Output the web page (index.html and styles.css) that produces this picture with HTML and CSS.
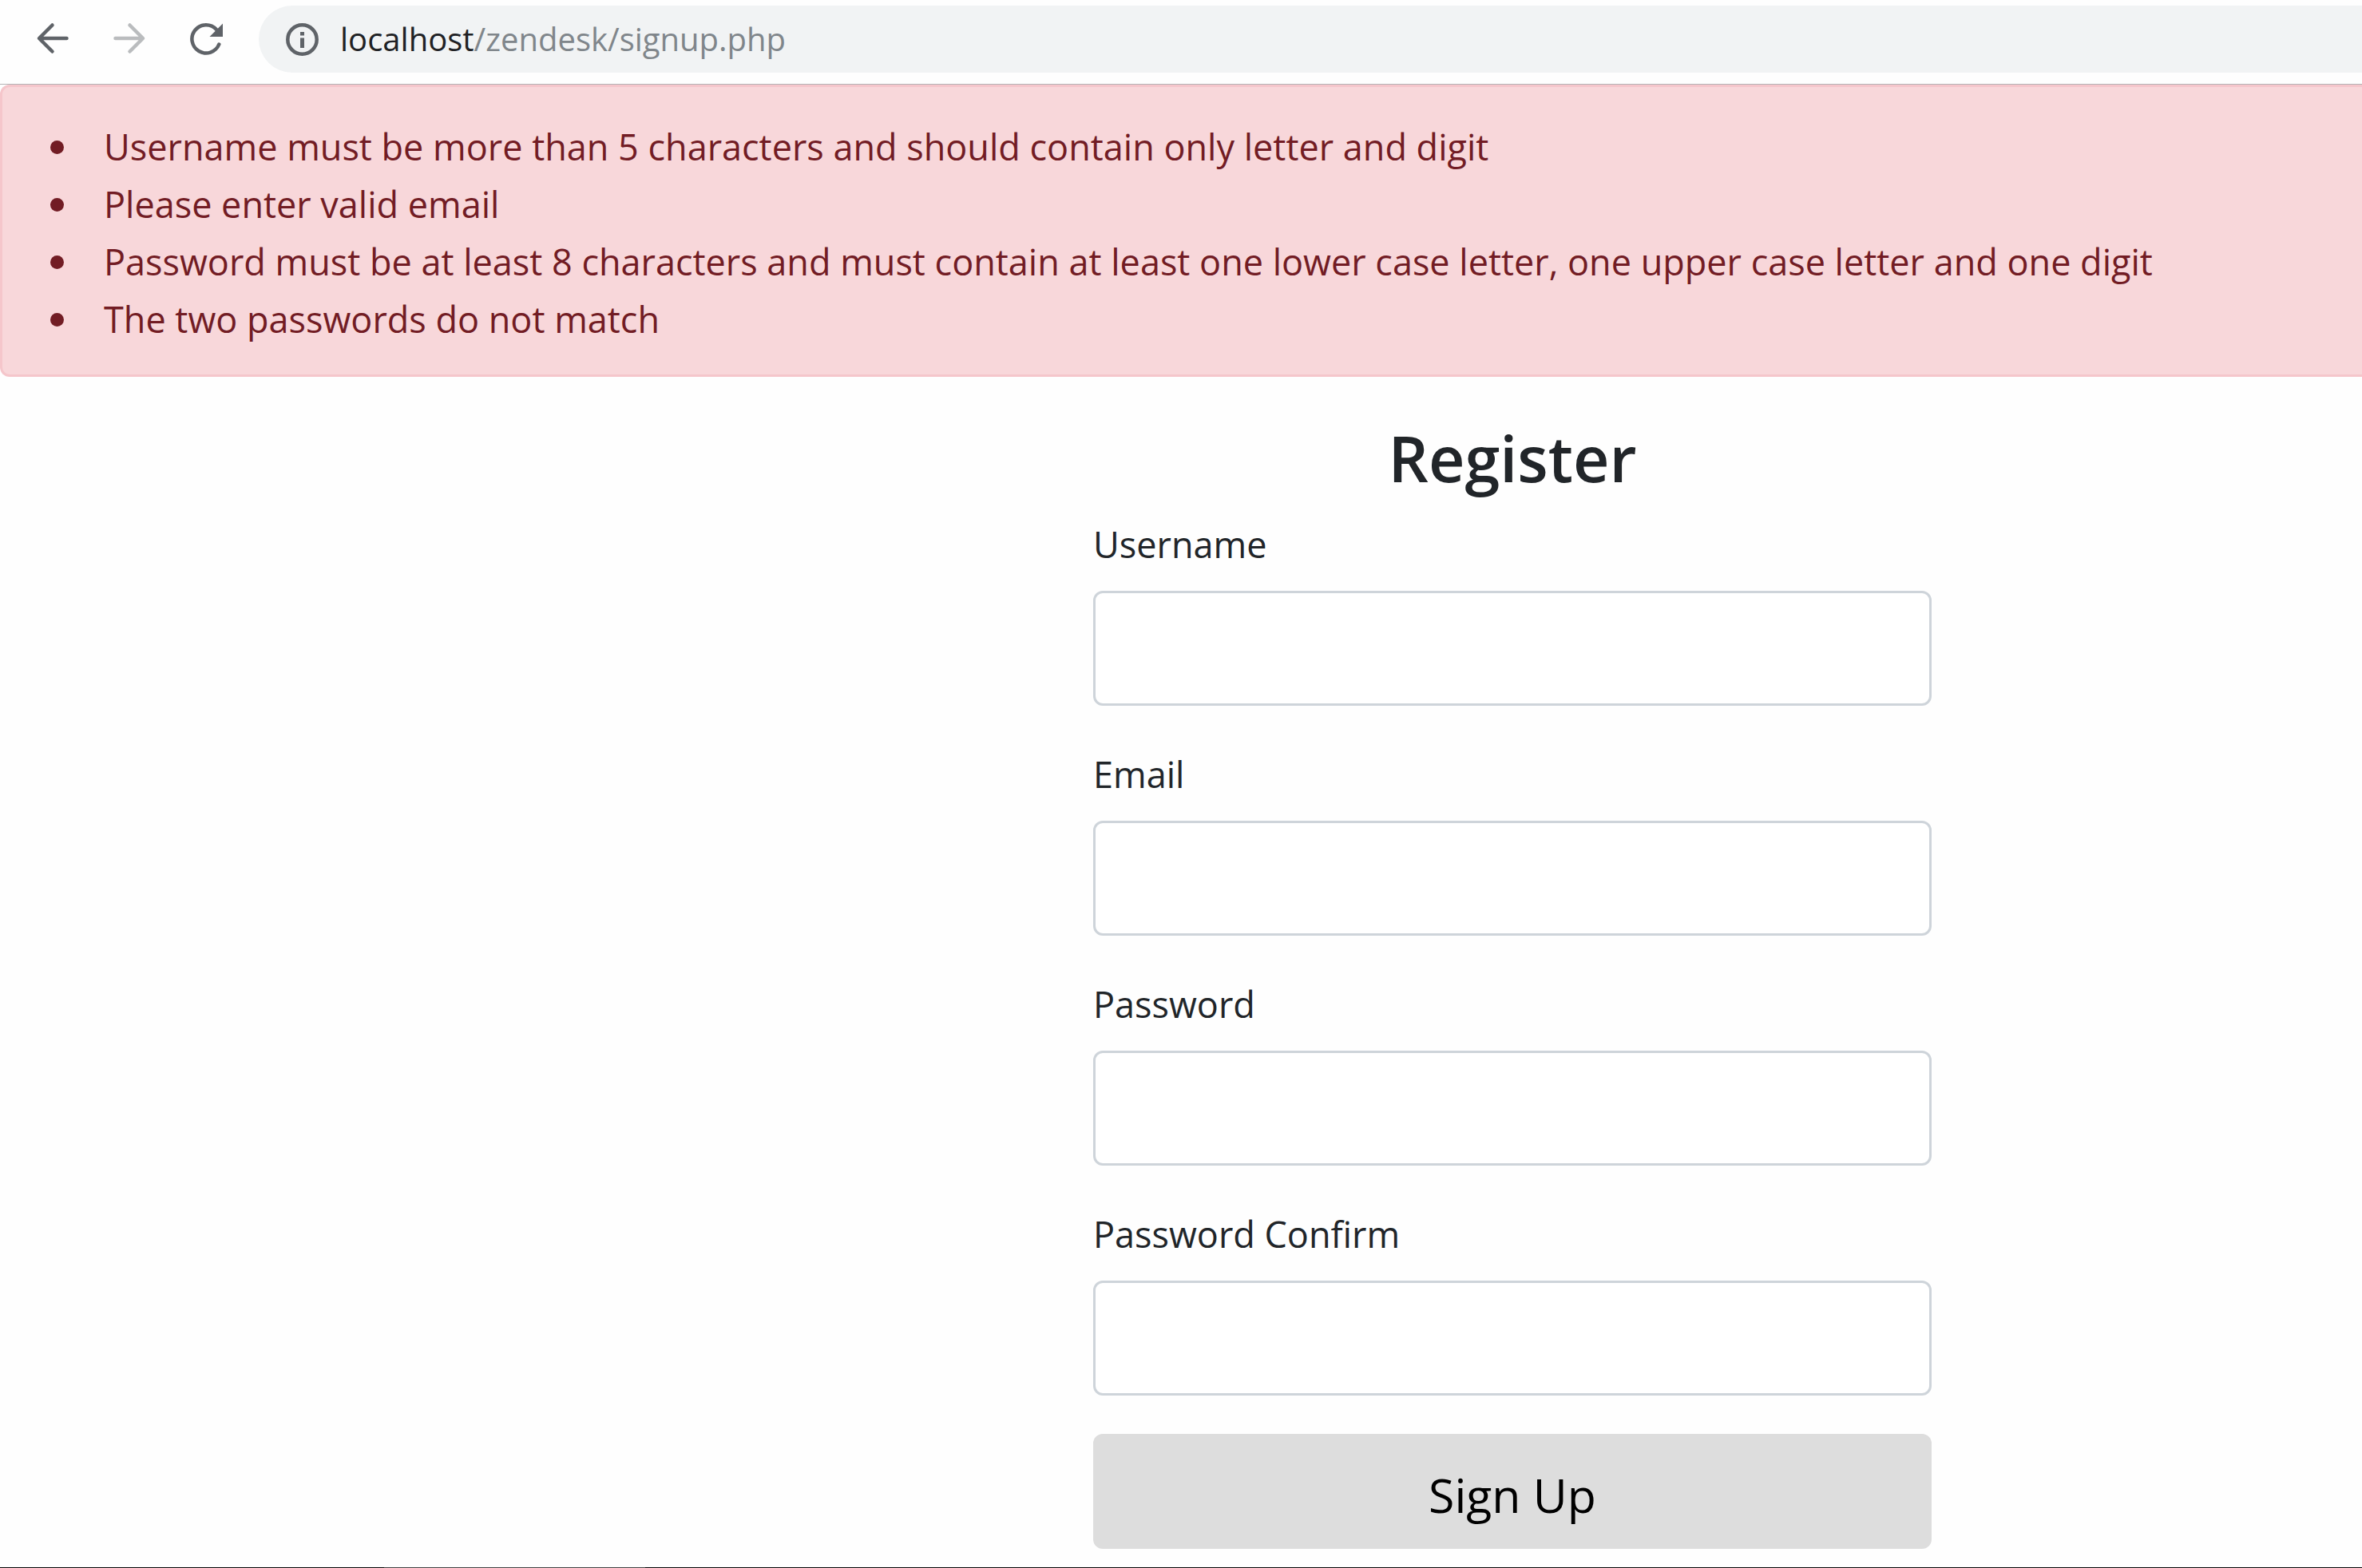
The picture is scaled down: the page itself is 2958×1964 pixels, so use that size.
FILE: index.html
```html
<!DOCTYPE html>
<html lang="en">
<head>
<meta charset="utf-8">
<title>Register</title>
<link rel="stylesheet" href="styles.css">
</head>
<body>
<header class="toolbar">
  <nav class="nav-buttons">
    <button class="icon-button" type="button" aria-label="Back">
      <svg class="icon" viewBox="0 0 48 48"><path d="M41.500 23H7.500M23.500 6.500L7 23l16.500 16.500" fill="none" stroke="#5f6368" stroke-width="4.500" stroke-linecap="round" stroke-linejoin="round"/></svg>
    </button>
    <button class="icon-button" type="button" aria-label="Forward" disabled>
      <svg class="icon" viewBox="0 0 48 48"><path d="M6.500 23h34M24.500 6.500L41 23 24.500 39.500" fill="none" stroke="#babcbe" stroke-width="4.500" stroke-linecap="round" stroke-linejoin="round"/></svg>
    </button>
    <button class="icon-button" type="button" aria-label="Reload">
      <svg class="icon" viewBox="0 0 48 48"><path d="M40.300 30.500A17.600 17.600 0 1 1 37 12" fill="none" stroke="#5f6368" stroke-width="4.500" stroke-linecap="round"/><path d="M45 4.500V21H28.500z" fill="#5f6368"/></svg>
    </button>
  </nav>
  <div class="address" role="textbox" aria-label="Address">
    <svg class="icon" viewBox="0 0 48 48"><circle cx="24.500" cy="24.500" r="18.200" fill="none" stroke="#5f6368" stroke-width="4.500"/><path d="M22 15h5v4.500h-5zM22 22.500h5V35h-5z" fill="#5f6368"/></svg>
    <span class="url"><span class="host">localhost</span>/zendesk/signup.php</span>
  </div>
</header>
<main class="page">
  <ul class="alert" role="alert">
    <li>Username must be more than 5 characters and should contain only letter and digit</li>
    <li>Please enter valid email</li>
    <li>Password must be at least 8 characters and must contain at least one lower case letter, one upper case letter and one digit</li>
    <li>The two passwords do not match</li>
  </ul>
  <form class="register">
    <h1 class="title">Register</h1>
    <div class="field">
      <label for="username">Username</label>
      <input id="username" type="text">
    </div>
    <div class="field">
      <label for="email">Email</label>
      <input id="email" type="email">
    </div>
    <div class="field">
      <label for="password">Password</label>
      <input id="password" type="password">
    </div>
    <div class="field">
      <label for="confirm">Password Confirm</label>
      <input id="confirm" type="password">
    </div>
    <button class="submit" type="submit">Sign Up</button>
  </form>
</main>
<footer class="taskbar"><span class="task"></span></footer>
</body>
</html>
```
FILE: styles.css
```css
* {
  box-sizing: border-box;
}

body {
  margin: 0;
  min-height: 100vh;
  display: flex;
  flex-direction: column;
  background: #fefefe;
  color: #212529;
  font-family: "Open Sans", "Noto Sans", sans-serif;
  font-size: 45px;
  line-height: 72px;
}

/* Browser toolbar */
.toolbar {
  display: flex;
  align-items: center;
  gap: 42px;
  padding: 7px 0 14px 42px;
  border-bottom: 1px solid #b3b3b5;
}

.nav-buttons {
  display: flex;
  gap: 48px;
}

.icon-button {
  display: flex;
  padding: 0;
  border: 0;
  background: none;
}

.icon {
  display: block;
  width: 48px;
  height: 48px;
  flex: none;
}

.address {
  flex: 1;
  display: flex;
  align-items: center;
  gap: 24px;
  height: 84px;
  padding-left: 30px;
  border-radius: 42px 0 0 42px;
  background: #f1f3f4;
}

.url {
  color: #80868b;
  font-size: 40px;
  white-space: nowrap;
}

.host {
  color: #202124;
}

/* Page */
.page {
  flex: 1;
}

.alert {
  margin: 0;
  padding: 39px 0 33px 60px;
  border: 3px solid #f5c6cb;
  border-right: 0;
  border-radius: 12px 0 0 12px;
  background: #f8d7da;
  color: #721c24;
  list-style: none;
}

.alert li {
  display: flex;
  align-items: center;
  gap: 50px;
}

.alert li::before {
  content: "";
  flex: none;
  width: 17px;
  height: 17px;
  border-radius: 50%;
  background: currentColor;
}

.register {
  width: 1050px;
  max-width: 100%;
  margin: 52px 0 0 auto;
  margin-right: calc((100% - 1050px) * 0.2825);
}

.title {
  margin: 0 0 20px;
  font-size: 79px;
  font-weight: 600;
  line-height: 100px;
  text-align: center;
}

.field {
  display: flex;
  flex-direction: column;
  gap: 22px;
  margin-bottom: 48px;
}

.field label {
  padding-top: 2px;
}

.field input {
  width: 100%;
  height: 144px;
  padding: 0 36px;
  border: 3px solid #ced4da;
  border-radius: 12px;
  background: #fff;
  font: inherit;
}

.submit {
  display: block;
  width: 100%;
  height: 144px;
  padding: 8px 0 0;
  border: 0;
  border-radius: 12px;
  background: #ddd;
  color: #000;
  font: inherit;
  font-size: 59px;
}

/* Top edge of the system taskbar */
.taskbar {
  display: flex;
  height: 1px;
  padding-left: 481px;
  background: #0a0a0a;
}

.task {
  width: 327px;
  background: #444;
}
```
